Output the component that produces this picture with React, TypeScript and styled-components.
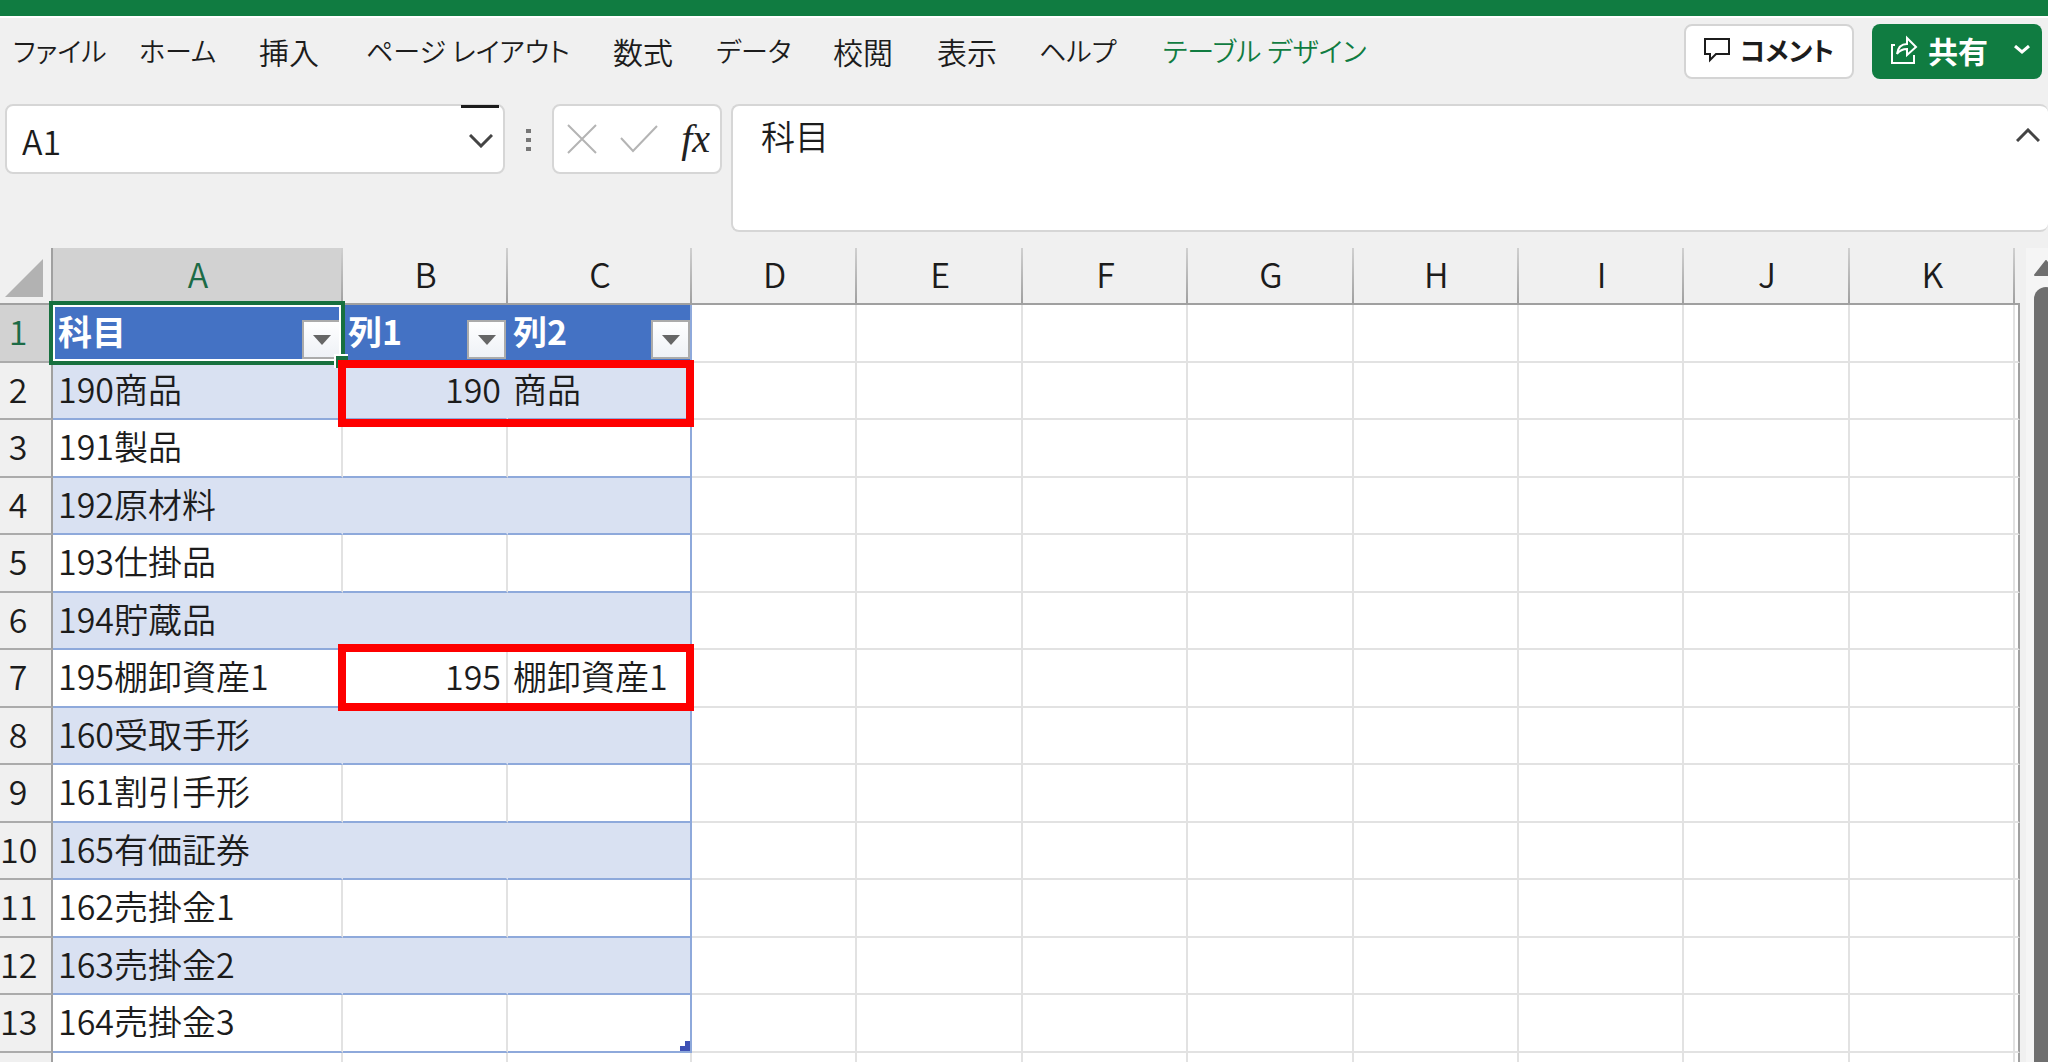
import React from "react";
import styled, { createGlobalStyle, css } from "styled-components";

const jp = `"Noto Sans CJK JP", sans-serif`;

const GlobalStyle = createGlobalStyle`
  *, *::before, *::after { box-sizing: border-box; }
  body { margin: 0; overflow: hidden; background: #f0f0f0; font-family: ${jp}; color: #1c1c1c; }
  button, input, textarea { font: inherit; color: inherit; }
  button { background: none; border: 0; padding: 0; cursor: pointer; }
`;

const Window = styled.div`
  display: flex;
  flex-direction: column;
  height: 100vh;
  background: #f0f0f0;
`;

const TitleStrip = styled.div`
  flex: none;
  height: 18px;
  background: #107c41;
  border-bottom: 2px solid #fff;
`;

const Ribbon = styled.header`
  display: flex;
  flex: none;
  align-items: center;
  justify-content: space-between;
  height: 70px;
  padding: 0 6px 4px 13px;
`;

const Tabs = styled.nav`
  display: grid;
  grid-template-columns: 126px 120px 107px 247px 103px 117px 104px 102px 124px auto;
  align-items: center;
  justify-items: start;
`;

const Tab = styled.button<{ $kana?: boolean; $accent?: boolean }>`
  font-size: ${(p) => (p.$kana ? 27 : 30)}px;
  line-height: 40px;
  font-weight: 350;
  white-space: pre;
  font-feature-settings: "palt";
  color: ${(p) => (p.$accent ? "#107c41" : "#1c1c1c")};
`;

const Actions = styled.div`
  display: flex;
  gap: 18px;
`;

const ActionButton = styled.button<{ $primary?: boolean }>`
  display: flex;
  align-items: center;
  gap: 10px;
  height: 55px;
  width: 170px;
  padding: 0 12px 2px 18px;
  border-radius: 8px;
  font-size: ${(p) => (p.$primary ? 30 : 26)}px;
  line-height: 40px;
  font-weight: 700;
  font-feature-settings: "palt";
  white-space: nowrap;
  background: ${(p) => (p.$primary ? "#107c41" : "#fff")};
  color: ${(p) => (p.$primary ? "#fff" : "#1c1c1c")};
  border: ${(p) => (p.$primary ? "0" : "2px solid #d4d4d4")};
  svg { flex: none; }
  svg:last-child:not(:first-child) { margin-left: auto; }
`;

const FormulaRow = styled.div`
  display: flex;
  flex: none;
  align-items: flex-start;
  height: 160px;
  padding: 16px 0 0 5px;
`;

const NameBox = styled.div`
  position: relative;
  display: flex;
  align-items: center;
  width: 500px;
  height: 70px;
  padding: 4px 10px 0 15px;
  background: #fff;
  border: 2px solid #d6d6d6;
  border-radius: 8px;
`;

const CaretMark = styled.span`
  position: absolute;
  top: -1px;
  right: 4px;
  width: 38px;
  height: 3px;
  background: #1c1c1c;
`;

const NameInput = styled.input`
  flex: 1;
  min-width: 0;
  padding: 0;
  border: 0;
  outline: 0;
  background: none;
  font-size: 34px;
  line-height: 40px;
  font-weight: 350;
`;

const Dots = styled.div`
  display: flex;
  flex-direction: column;
  justify-content: center;
  align-items: center;
  gap: 5px;
  width: 47px;
  height: 72px;
  i { width: 5px; height: 4px; background: #777; }
`;

const FxGroup = styled.div`
  display: flex;
  align-items: center;
  justify-content: space-between;
  width: 170px;
  height: 70px;
  padding: 0 10px 0 13px;
  background: #fff;
  border: 2px solid #d6d6d6;
  border-radius: 8px;
`;

const FxButton = styled.button`
  display: flex;
  font: italic 400 40px/44px "Liberation Serif", serif;
  color: #222;
`;

const FormulaBox = styled.div`
  display: flex;
  flex: 1;
  align-items: flex-start;
  margin-left: 9px;
  height: 128px;
  padding: 10px 8px 0 28px;
  background: #fff;
  border: 2px solid #d6d6d6;
  border-right: 0;
  border-radius: 8px;
`;

const FormulaInput = styled.textarea`
  flex: 1;
  height: 100px;
  padding: 0;
  border: 0;
  outline: 0;
  resize: none;
  background: none;
  font-size: 34px;
  line-height: 40px;
  font-weight: 350;
`;

const ExpandButton = styled.button`
  display: flex;
  margin-top: 12px;
`;

const Workspace = styled.main`
  display: flex;
  flex: 1;
  min-height: 0;
  overflow: hidden;
`;

const SheetPane = styled.div`
  position: relative;
  flex: 1;
  min-width: 0;
  overflow: hidden;
`;

const Grid = styled.table`
  width: 100%;
  table-layout: fixed;
  border-collapse: separate;
  border-spacing: 0;
  font-size: 34px;
  line-height: 40px;
  font-weight: 350;
`;

const Col = styled.col<{ $w?: number }>`
  ${(p) => p.$w && css`width: ${p.$w}px;`}
`;

const Corner = styled.td`
  height: 57px;
  padding: 0 8px 6px 0;
  vertical-align: bottom;
  border-right: 2px solid #a0a0a0;
  border-bottom: 2px solid #a0a0a0;
  svg { display: block; margin-left: auto; }
`;

const ColHead = styled.th<{ $active?: boolean; $edge?: boolean }>`
  height: 57px;
  padding: 0 0 4px;
  font-weight: 350;
  text-align: center;
  vertical-align: middle;
  color: ${(p) => (p.$active ? "#1c6b46" : "#1c1c1c")};
  background-color: ${(p) => (p.$active ? "#d2d2d2" : "#f0f0f0")};
  border-bottom: 2px solid #a0a0a0;
  ${(p) => !p.$edge && css`
    background-image: linear-gradient(#d0d0d0, #a0a0a0);
    background-position: right;
    background-size: 2px 100%;
    background-repeat: no-repeat;
  `}
`;

const Row = styled.tr`
  height: 57px;
  &:nth-child(odd) { height: 58px; }
`;

const RowHead = styled.th<{ $active?: boolean }>`
  padding: 0 15px 4px 0;
  font-weight: 350;
  text-align: center;
  white-space: nowrap;
  color: ${(p) => (p.$active ? "#1c6b46" : "#1c1c1c")};
  background: ${(p) => (p.$active ? "#d2d2d2" : "#f0f0f0")};
  border-right: 2px solid #a0a0a0;
  border-bottom: 2px solid #ababab;
`;

type Kind = "plain" | "head" | "band" | "body";

const Cell = styled.td<{ $kind: Kind; $last?: boolean; $num?: boolean; $edge?: boolean }>`
  position: relative;
  padding: 0 5px 4px;
  white-space: nowrap;
  text-align: ${(p) => (p.$num ? "right" : "left")};
  background: #fff;
  border-right: 2px solid #e2e2e2;
  border-bottom: 2px solid #e2e2e2;
  ${(p) => p.$kind === "head" && css`
    background: #4472c4; color: #fff; font-weight: 700;
    border-color: #4472c4;
  `}
  ${(p) => p.$kind === "band" && css`
    background: #d9e1f2; border-right-color: #d9e1f2; border-bottom-color: #8ea9db;
  `}
  ${(p) => p.$kind === "body" && css`border-bottom-color: #8ea9db;`}
  ${(p) => p.$last && css`border-right-color: #8ea9db;`}
  ${(p) => p.$edge && css`padding: 0; border-right-color: #a0a0a0;`}
`;

const FilterButton = styled.button`
  position: absolute;
  right: 0;
  bottom: 2px;
  display: flex;
  align-items: center;
  justify-content: center;
  width: 39px;
  height: 39px;
  background: linear-gradient(#fff, #eef1f6);
  border: 2px solid #ababab;
`;

const Selection = styled.div`
  position: absolute;
  left: 49px;
  top: 53px;
  width: 296px;
  height: 64px;
  border: 4px solid #17703f;
  &::before { content: ""; position: absolute; inset: 0; border: 2px solid #fff; }
  &::after {
    content: ""; position: absolute; right: -7px; bottom: -7px;
    width: 14px; height: 14px; background: #17703f; border: 2px solid #fff;
    border-right: 0; border-bottom: 0;
  }
`;

const RedFrame = styled.div<{ $top: number }>`
  position: absolute;
  left: 338px;
  top: ${(p) => p.$top}px;
  width: 356px;
  height: 67px;
  border: 8px solid #fe0000;
`;

const ResizeHandle = styled.span`
  position: absolute;
  right: 0;
  bottom: 0;
  width: 10px;
  height: 10px;
  background: #3f51b5;
  clip-path: polygon(50% 0, 100% 0, 100% 100%, 0 100%, 0 50%, 50% 50%);
`;

const ScrollTrack = styled.div`
  display: flex;
  flex: none;
  flex-direction: column;
  width: 28px;
  padding: 12px 0 0 14px;
  overflow: hidden;
  background: linear-gradient(90deg, #f0f0f0 6px, #f5f5f5 6px);
`;

const ScrollThumb = styled.div`
  flex: 1;
  width: 24px;
  margin-top: 11px;
  background: #6f6f6f;
  border-radius: 12px 12px 0 0;
`;

const tabs: { label: string; kana?: boolean; accent?: boolean }[] = [
  { label: "ファイル", kana: true },
  { label: "ホーム", kana: true },
  { label: "挿入" },
  { label: "ページ レイアウト", kana: true },
  { label: "数式" },
  { label: "データ", kana: true },
  { label: "校閲" },
  { label: "表示" },
  { label: "ヘルプ", kana: true },
  { label: "テーブル デザイン", kana: true, accent: true },
];

const letters = ["A", "B", "C", "D", "E", "F", "G", "H", "I", "J", "K"];

const rows: string[][] = [
  ["科目", "列1", "列2"],
  ["190商品", "190", "商品"],
  ["191製品"],
  ["192原材料"],
  ["193仕掛品"],
  ["194貯蔵品"],
  ["195棚卸資産1", "195", "棚卸資産1"],
  ["160受取手形"],
  ["161割引手形"],
  ["165有価証券"],
  ["162売掛金1"],
  ["163売掛金2"],
  ["164売掛金3"],
  [],
];

function kindOf(row: number, col: number): Kind {
  if (col > 2 || row > 12) return "plain";
  if (row === 0) return "head";
  return row % 2 === 1 ? "band" : "body";
}

export default function App() {
  return (
    <Window>
      <GlobalStyle />
      <TitleStrip />
      <Ribbon>
        <Tabs>
          {tabs.map((t) => (
            <Tab key={t.label} $kana={t.kana} $accent={t.accent}>{t.label}</Tab>
          ))}
        </Tabs>
        <Actions>
          <ActionButton>
            <svg width="26" height="26" viewBox="0 0 26 26" fill="none" stroke="#1c1c1c" strokeWidth="2">
              <path d="M1 2h24v15H12l-6 6v-6H1z" />
            </svg>
            コメント
          </ActionButton>
          <ActionButton $primary>
            <svg width="28" height="30" viewBox="0 0 28 30" fill="none" stroke="#fff" strokeWidth="2">
              <path d="M5 10H2v18h22v-8" />
              <path d="M7 19c1-7 4-10 10-10V3l9 9-9 8v-6c-4 0-7 1-10 5z" />
            </svg>
            共有
            <svg width="16" height="10" viewBox="0 0 16 10" fill="none" stroke="#fff" strokeWidth="3">
              <path d="M1 1l7 6 7-6" />
            </svg>
          </ActionButton>
        </Actions>
      </Ribbon>

      <FormulaRow>
        <NameBox>
          <CaretMark />
          <NameInput aria-label="名前ボックス" defaultValue="A1" />
          <svg width="24" height="14" viewBox="0 0 24 14" fill="none" stroke="#444" strokeWidth="3">
            <path d="M1 1l11 11L23 1" />
          </svg>
        </NameBox>
        <Dots><i /><i /><i /></Dots>
        <FxGroup>
          <FxButton aria-label="キャンセル">
            <svg width="30" height="30" viewBox="0 0 30 30" fill="none" stroke="#b4b4b4" strokeWidth="2">
              <path d="M1 1l28 28M29 1L1 29" />
            </svg>
          </FxButton>
          <FxButton aria-label="入力">
            <svg width="38" height="28" viewBox="0 0 38 28" fill="none" stroke="#b4b4b4" strokeWidth="2">
              <path d="M1 13l12 13L37 1" />
            </svg>
          </FxButton>
          <FxButton>fx</FxButton>
        </FxGroup>
        <FormulaBox>
          <FormulaInput aria-label="数式バー" defaultValue="科目" />
          <ExpandButton aria-label="折りたたむ">
            <svg width="24" height="14" viewBox="0 0 24 14" fill="none" stroke="#444" strokeWidth="3">
              <path d="M1 13L12 2l11 11" />
            </svg>
          </ExpandButton>
        </FormulaBox>
      </FormulaRow>

      <Workspace>
        <SheetPane>
          <Grid>
            <colgroup>
              <Col $w={53} />
              <Col $w={290} />
              <Col $w={165} />
              <Col $w={184} />
              {letters.slice(3).map((l) => <Col key={l} />)}
              <Col $w={5} />
            </colgroup>
            <thead>
              <tr>
                <Corner>
                  <svg width="38" height="38" viewBox="0 0 38 38"><path d="M38 0v38H0z" fill="#b2b2b2" /></svg>
                </Corner>
                {letters.map((l, i) => <ColHead key={l} $active={i === 0}>{l}</ColHead>)}
                <ColHead $edge />
              </tr>
            </thead>
            <tbody>
              {rows.map((row, r) => (
                <Row key={r}>
                  <RowHead $active={r === 0}>{r < 13 ? r + 1 : ""}</RowHead>
                  {letters.map((l, c) => (
                    <Cell key={l} $kind={kindOf(r, c)} $last={c === 2 && r < 13} $num={c === 1 && r > 0}>
                      {row[c]}
                      {r === 0 && c < 3 && (
                        <FilterButton aria-label="フィルター">
                          <svg width="18" height="10" viewBox="0 0 18 10"><path d="M0 0h18L9 10z" fill="#666" /></svg>
                        </FilterButton>
                      )}
                      {r === 12 && c === 2 && <ResizeHandle />}
                    </Cell>
                  ))}
                  <Cell $kind="plain" $edge />
                </Row>
              ))}
            </tbody>
          </Grid>
          <Selection />
          <RedFrame $top={112} />
          <RedFrame $top={396} />
        </SheetPane>
        <ScrollTrack>
          <svg width="24" height="16" viewBox="0 0 24 16"><path d="M12 1L23 15H1z" fill="#6f6f6f" stroke="#6f6f6f" strokeLinejoin="round" strokeWidth="2" /></svg>
          <ScrollThumb />
        </ScrollTrack>
      </Workspace>
    </Window>
  );
}
